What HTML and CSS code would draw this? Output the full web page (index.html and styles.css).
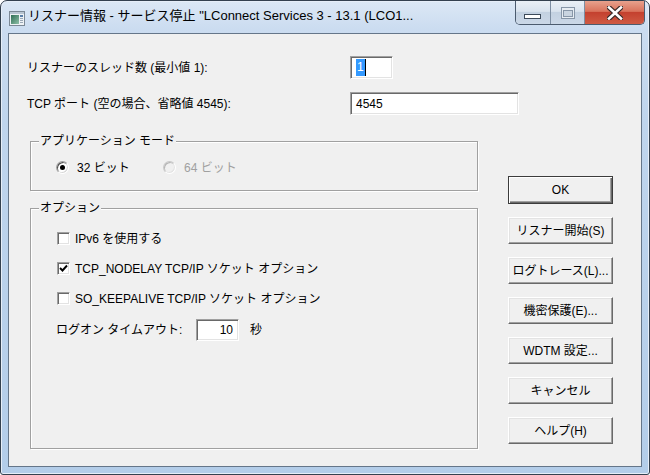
FILE: index.html
```html
<!DOCTYPE html>
<html lang="ja">
<head>
<meta charset="utf-8">
<title>リスナー情報</title>
<link rel="stylesheet" href="styles.css">
</head>
<body>
<div class="window">
  <div class="titlebar">
    <svg class="app-icon" width="16" height="15" viewBox="0 0 16 15">
      <defs>
        <linearGradient id="ig" x1="0" y1="0" x2="1" y2="1">
          <stop offset="0" stop-color="#2f6f55"/>
          <stop offset="1" stop-color="#8fc0a8"/>
        </linearGradient>
      </defs>
      <rect x="0.5" y="0.5" width="15" height="14" fill="#eef2f5" stroke="#7b8895"/>
      <rect x="1" y="1" width="14" height="2" fill="#b9c6d2"/>
      <rect x="2" y="4" width="8" height="9" fill="url(#ig)"/>
      <rect x="11" y="4" width="3" height="2" fill="#5a7fa8"/>
      <rect x="11" y="7" width="3" height="1" fill="#9aa8b6"/>
      <rect x="11" y="9" width="3" height="1" fill="#9aa8b6"/>
      <rect x="11" y="11" width="3" height="1" fill="#9aa8b6"/>
    </svg>
    <div class="title">リスナー情報 - サービス停止 "LConnect Services 3 - 13.1 (LCO1...</div>
    <div class="caption">
      <div class="cbtn min">
        <svg width="18" height="6" viewBox="0 0 18 6"><rect x="0.5" y="0.5" width="16" height="4" fill="#fff" stroke="#3c4a5a"/></svg>
      </div>
      <div class="cdiv"></div>
      <div class="cbtn max">
        <svg width="14" height="12" viewBox="0 0 14 12"><rect x="0.5" y="0.5" width="13" height="11" fill="#e6ecf2" stroke="#8796a8"/><rect x="2.5" y="3.5" width="9" height="6" fill="#c9d4e0" stroke="#8796a8"/></svg>
      </div>
      <div class="cdiv"></div>
      <div class="cbtn close">
        <svg width="16" height="14" viewBox="0 0 16 14">
          <path d="M2 1.5 L14 12.5 M14 1.5 L2 12.5" stroke="#3a2a28" stroke-width="5" stroke-linecap="square"/>
          <path d="M2 1.5 L14 12.5 M14 1.5 L2 12.5" stroke="#ffffff" stroke-width="2.6" stroke-linecap="square"/>
        </svg>
      </div>
    </div>
  </div>
  <div class="client">
    <div class="fields">
      <div class="flabel">リスナーのスレッド数 (最小値 1):</div>
      <div class="edit short"><span class="sel">1</span></div>
      <div class="flabel">TCP ポート (空の場合、省略値 4545):</div>
      <div class="edit long">4545</div>
    </div>
    <div class="main">
      <div class="left">
        <div class="group mode">
          <div class="gtitle">アプリケーション モード</div>
          <div class="radios">
            <div class="radio first"><span class="rbtn"><span class="rdot"></span></span>32 ビット</div>
            <div class="radio disabled"><span class="rbtn"></span>64 ビット</div>
          </div>
        </div>
        <div class="group options">
          <div class="gtitle">オプション</div>
          <div class="check first"><span class="box"></span>IPv6 を使用する</div>
          <div class="check"><span class="box"><svg width="9" height="9" viewBox="0 0 9 9"><path d="M1 4 L3.5 6.5 L8 1.5" fill="none" stroke="#000" stroke-width="1.9"/></svg></span>TCP_NODELAY TCP/IP ソケット オプション</div>
          <div class="check"><span class="box"></span>SO_KEEPALIVE TCP/IP ソケット オプション</div>
          <div class="timeout">
            <span class="tlabel">ログオン タイムアウト:</span>
            <div class="edit num">10</div>
            <span class="unit">秒</span>
          </div>
        </div>
      </div>
      <div class="buttons">
        <div class="btn default">OK</div>
        <div class="btn">リスナー開始(S)</div>
        <div class="btn">ログトレース(L)...</div>
        <div class="btn">機密保護(E)...</div>
        <div class="btn">WDTM 設定...</div>
        <div class="btn">キャンセル</div>
        <div class="btn">ヘルプ(H)</div>
      </div>
    </div>
  </div>
</div>
</body>
</html>
```

FILE: styles.css
```css
html, body {
  margin: 0;
  padding: 0;
}

body {
  width: 650px;
  height: 475px;
  overflow: hidden;
  background: #ffffff;
  font-family: "Liberation Sans", "Noto Sans CJK JP", sans-serif;
  font-size: 12px;
  color: #000;
}

.window {
  box-sizing: border-box;
  width: 650px;
  height: 475px;
  border: 1px solid #34414f;
  border-radius: 7px 7px 3px 3px;
  background: linear-gradient(180deg, #dce8f5 0px, #cbdcf0 28px, #bfd5ed 120px, #b3cde9 100%);
  box-shadow: inset 0 0 0 1px #e6eef8;
  padding: 0 7px 7px 7px;
  display: flex;
  flex-direction: column;
}

/* ---------- title bar ---------- */
.titlebar {
  height: 32px;
  display: flex;
  align-items: flex-start;
  flex: none;
}

.app-icon {
  margin: 10px 0 0 1px;
  flex: none;
}

.title {
  margin: 7px 0 0 3px;
  font-size: 13px;
  line-height: 16px;
  white-space: nowrap;
  color: #000;
}

.caption {
  margin-left: auto;
  margin-right: -3px;
  height: 23px;
  display: flex;
  border: 1px solid #4b5b6e;
  border-top: none;
  border-radius: 0 0 5px 5px;
  overflow: hidden;
  flex: none;
}

.cbtn {
  height: 23px;
  display: flex;
  align-items: center;
  justify-content: center;
}

.cbtn.min {
  width: 34px;
  background: linear-gradient(180deg, #eaf0f6 0%, #d9e3ee 45%, #c3d1e1 50%, #cbd8e7 100%);
  align-items: flex-end;
}

.cbtn.min svg {
  margin-bottom: 4px;
}

.cbtn.max {
  width: 33px;
  background: linear-gradient(180deg, #eaf0f6 0%, #d9e3ee 45%, #c3d1e1 50%, #cbd8e7 100%);
}

.cbtn.close {
  width: 59px;
  background: linear-gradient(180deg, #e8a18d 0%, #d9735c 45%, #c4412f 50%, #cf5a43 100%);
}

.cdiv {
  width: 1px;
  background: #7d8ea2;
}

/* ---------- client ---------- */
.client {
  flex: 1;
  background: #f0f0f0;
  border: 1px solid #657689;
  display: flex;
  flex-direction: column;
}

.fields {
  display: grid;
  grid-template-columns: 323px auto;
  row-gap: 13px;
  align-items: center;
  padding: 22px 0 0 18px;
}

.flabel {
  line-height: 14px;
  white-space: nowrap;
}

.edit {
  box-sizing: border-box;
  height: 23px;
  background: #fff;
  border: 1px solid;
  border-color: #a0a0a0 #ffffff #ffffff #a0a0a0;
  box-shadow: inset 1px 1px 0 #696969, inset -1px -1px 0 #e3e3e3;
  padding-left: 5px;
  display: flex;
  align-items: center;
  line-height: 16px;
  color: #000;
}

.edit.short { width: 43px; }
.edit.long { width: 169px; }

.sel {
  background: #3399ff;
  color: #fff;
  padding: 0 1px;
  border-right: 1px solid #000;
  line-height: 17px;
}

.main {
  display: flex;
  margin-top: 26px;
  padding-left: 21px;
}

.left {
  width: 448px;
  display: flex;
  flex-direction: column;
}

.group {
  box-sizing: border-box;
  border: 1px solid #a0a0a0;
  box-shadow: 1px 1px 0 #ffffff, inset 1px 1px 0 #ffffff;
}

.gtitle {
  display: block;
  width: max-content;
  margin: -8px 0 0 8px;
  padding: 0 1px;
  background: #f0f0f0;
  line-height: 14px;
  height: 14px;
  white-space: nowrap;
}

.group.mode {
  padding-bottom: 16px;
}

.radios {
  display: flex;
  margin-top: 13px;
  padding-left: 25px;
  height: 13px;
  align-items: center;
}

.radio {
  display: flex;
  align-items: center;
  line-height: 14px;
  white-space: nowrap;
}

.radio.first {
  width: 107px;
}

.radio.disabled {
  color: #a0a0a0;
}

.rbtn {
  box-sizing: border-box;
  width: 13px;
  height: 13px;
  border-radius: 50%;
  border: 1px solid;
  border-color: #a0a0a0 #ffffff #ffffff #a0a0a0;
  box-shadow: inset 1px 1px 0 #505050, inset -1px -1px 0 #d8d8d8;
  background: #fff;
  display: flex;
  align-items: center;
  justify-content: center;
  margin-right: 8px;
  flex: none;
}

.radio.disabled .rbtn {
  background: #f0f0f0;
  box-shadow: inset 1px 1px 0 #b4b4b4, inset -1px -1px 0 #e3e3e3;
  border-color: #c8c8c8 #ffffff #ffffff #c8c8c8;
}

.rdot {
  width: 5px;
  height: 5px;
  border-radius: 50%;
  background: #000;
}

.group.options {
  margin-top: 17px;
  height: 241px;
}

.check {
  display: flex;
  align-items: center;
  height: 13px;
  margin-top: 17px;
  padding-left: 26px;
  line-height: 14px;
  white-space: nowrap;
}

.check.first {
  margin-top: 17px;
}

.box {
  box-sizing: border-box;
  width: 13px;
  height: 13px;
  background: #fff;
  border: 1px solid;
  border-color: #a0a0a0 #ffffff #ffffff #a0a0a0;
  box-shadow: inset 1px 1px 0 #696969, inset -1px -1px 0 #e3e3e3;
  margin-right: 5px;
  display: flex;
  align-items: center;
  justify-content: center;
  flex: none;
}

.timeout {
  display: flex;
  align-items: center;
  margin-top: 14px;
  padding-left: 25px;
  line-height: 14px;
  white-space: nowrap;
}

.tlabel {
  width: 140px;
}

.edit.num {
  width: 43px;
  height: 22px;
  justify-content: flex-end;
  padding: 0 5px 0 0;
}

.unit {
  margin-left: 11px;
}

/* ---------- buttons ---------- */
.buttons {
  margin-left: 30px;
  width: 105px;
  padding-top: 35px;
  display: flex;
  flex-direction: column;
  gap: 13px;
}

.btn {
  box-sizing: border-box;
  height: 27px;
  border: 1px solid;
  border-color: #ffffff #696969 #696969 #ffffff;
  box-shadow: inset -1px -1px 0 #a0a0a0, inset 1px 1px 0 #e3e3e3;
  background: #f0f0f0;
  display: flex;
  align-items: center;
  justify-content: center;
  white-space: nowrap;
  line-height: 14px;
  letter-spacing: 0;
}

.btn.default {
  height: 28px;
  border: 1px solid #3c3c3c;
  box-shadow: inset 1px 1px 0 #ffffff, inset -1px -1px 0 #696969, inset -2px -2px 0 #a0a0a0;
}
```
